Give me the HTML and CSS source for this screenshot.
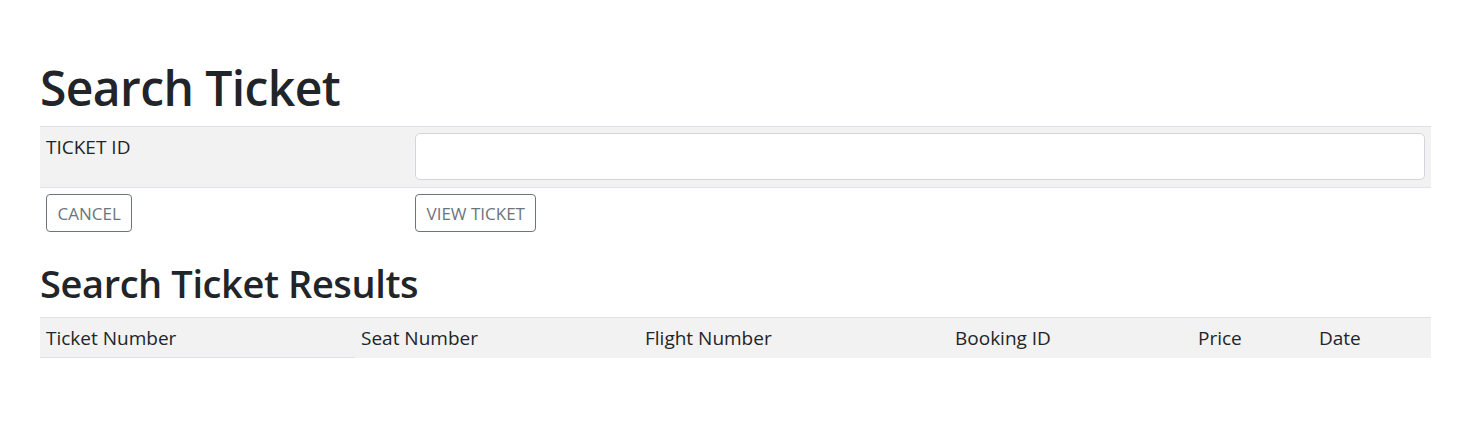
FILE: index.html
```html
<!DOCTYPE html>
<html lang="en">
<head>
<meta charset="utf-8">
<title>Search Ticket</title>
<link rel="stylesheet" href="styles.css">
</head>
<body>
<main class="page">
  <h1 class="title">Search Ticket</h1>
  <table class="form-table">
    <tbody>
      <tr class="form-row">
        <td class="label-cell">TICKET ID</td>
        <td class="input-cell"><input class="text-input" type="text"></td>
      </tr>
      <tr class="btn-row">
        <td><button class="btn" type="button">CANCEL</button></td>
        <td><button class="btn" type="button">VIEW TICKET</button></td>
      </tr>
    </tbody>
  </table>
  <h2 class="subtitle">Search Ticket Results</h2>
  <table class="results">
    <thead>
      <tr>
        <th class="c1">Ticket Number</th>
        <th class="c2">Seat Number</th>
        <th class="c3">Flight Number</th>
        <th class="c4">Booking ID</th>
        <th class="c5">Price</th>
        <th class="c6">Date</th>
      </tr>
    </thead>
  </table>
</main>
</body>
</html>
```

FILE: styles.css
```css
html, body {
  margin: 0;
  padding: 0;
  background: #ffffff;
}

body {
  font-family: "Open Sans", "Noto Sans", sans-serif;
  color: #212529;
}

.page {
  width: 1391px;
  padding: 58px 0 0 40px;
}

.title {
  margin: 0 0 8px 0;
  font-size: 48px;
  line-height: 60px;
  font-weight: 600;
  letter-spacing: -0.6px;
}

.subtitle {
  margin: 21px 0 10px 0;
  font-size: 38px;
  line-height: 48px;
  font-weight: 600;
  letter-spacing: -0.4px;
}

table {
  border-collapse: collapse;
  width: 100%;
}

.form-table td {
  padding: 6px;
  vertical-align: top;
  line-height: 27px;
}

.form-row {
  background: #f2f2f2;
  border-top: 1px solid #dee2e6;
  border-bottom: 1px solid #dee2e6;
}

.form-row td {
  padding-bottom: 7px;
}

.label-cell {
  width: 357px;
  font-size: 19px;
}

.form-row .label-cell {
  padding-top: 7px;
  padding-bottom: 6px;
}

.text-input {
  display: block;
  box-sizing: border-box;
  width: 100%;
  height: 47px;
  margin: 0;
  border: 1px solid #d2d6dc;
  border-radius: 5px;
  background: #ffffff;
  font: inherit;
}

.btn {
  display: inline-block;
  margin: 0;
  padding: 4.5px 10.5px;
  border: 1px solid #6c757d;
  border-radius: 4px;
  background: #ffffff;
  color: #6c757d;
  font-family: inherit;
  font-size: 17px;
  line-height: 27px;
}

.results thead tr {
  background: #f2f2f2;
  border-top: 1px solid #dee2e6;
}

.results th {
  padding: 5px 6px 4px 6px;
  text-align: left;
  font-weight: 400;
  font-size: 19px;
  line-height: 30px;
}

.results .c1 { width: 303px; border-bottom: 1px solid #dee2e6; }
.results .c2 { width: 272px; }
.results .c3 { width: 298px; }
.results .c4 { width: 231px; }
.results .c5 { width: 109px; }
.results .c6 { width: auto; }
```
